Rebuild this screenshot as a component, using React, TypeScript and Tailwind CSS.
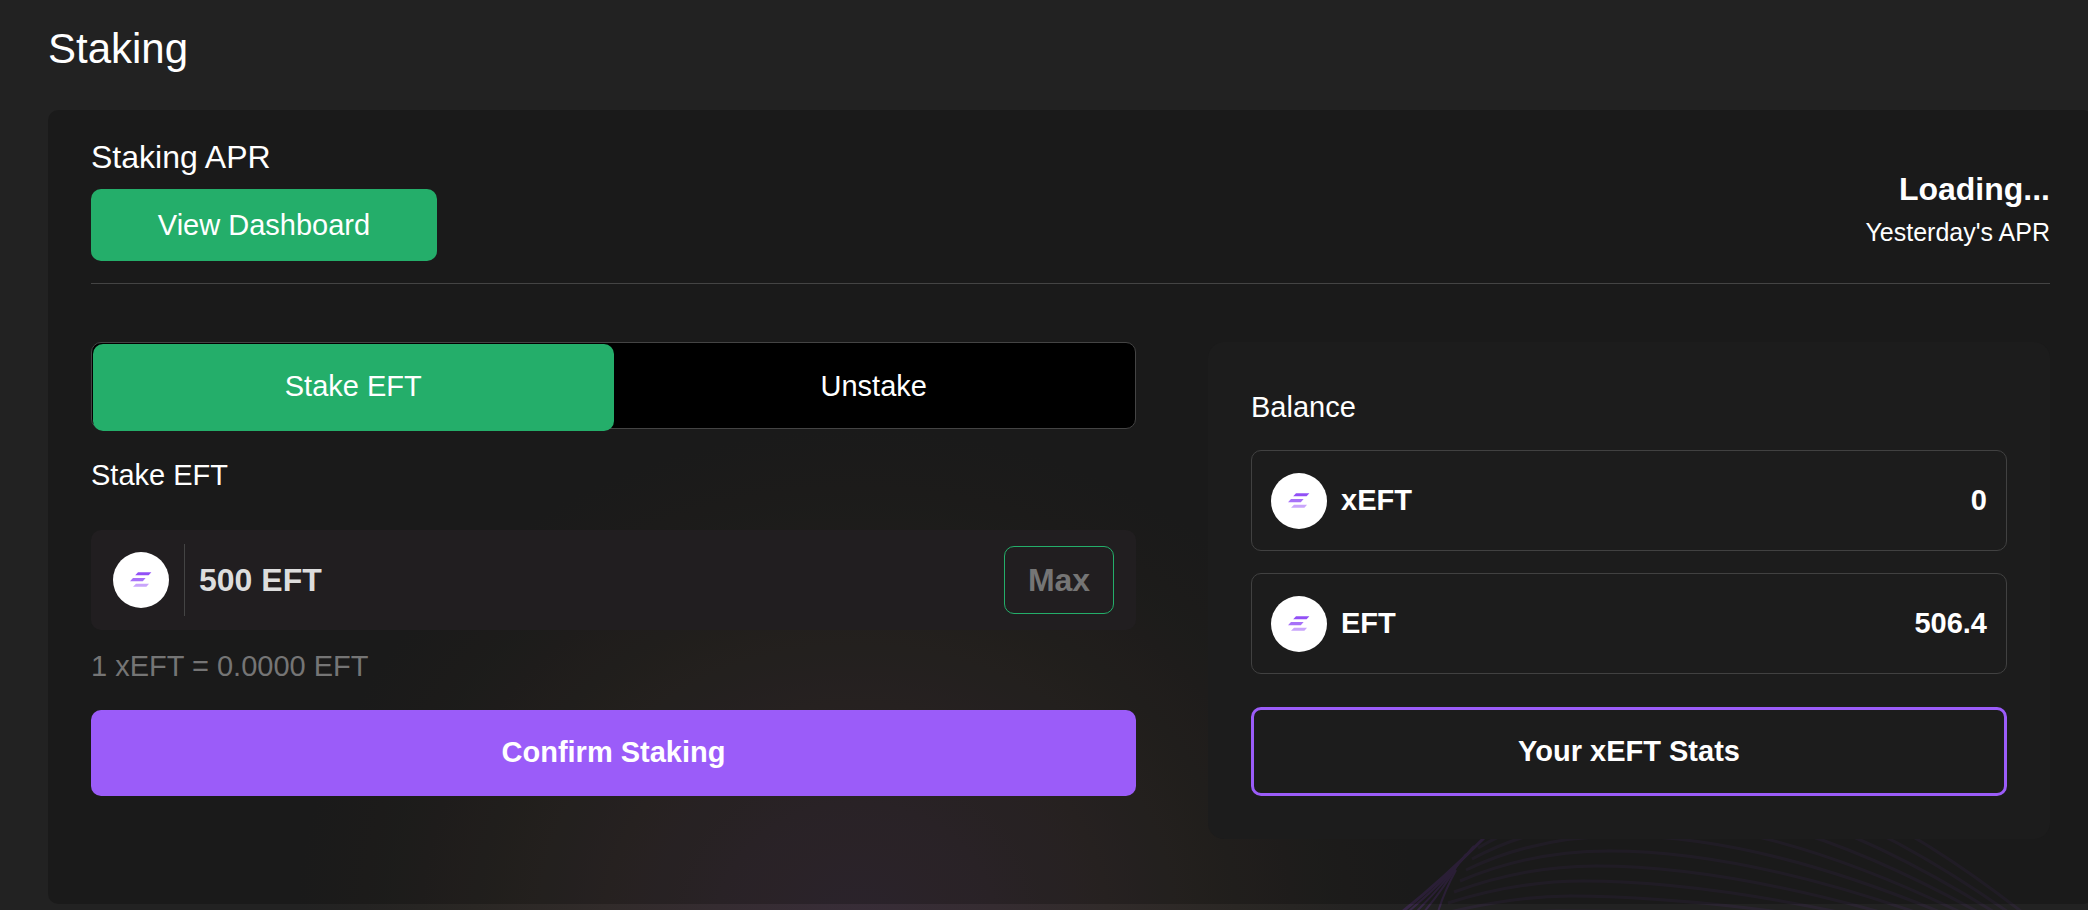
import React from "react";

function TokenIcon() {
  return (
    <span className="flex size-14 shrink-0 items-center justify-center rounded-full bg-white">
      <svg width="56" height="56" viewBox="0 0 56 56" aria-hidden="true">
        <path d="M25 20.2H38.4L35.6 23.2H22.2Z" fill="#9250f6" />
        <path d="M20 26H32.6L29.8 29.2H17Z" fill="#a771f8" />
        <path d="M23 31.8H36L33.4 34.8H20Z" fill="#c9a5fb" />
      </svg>
    </span>
  );
}

function BalanceRow({ name, value }: { name: string; value: string }) {
  return (
    <li className="flex h-[101px] items-center rounded-[10px] border border-[#414141] px-[19px] text-[29px] font-bold">
      <TokenIcon />
      <span className="ml-3.5">{name}</span>
      <span className="ml-auto">{value}</span>
    </li>
  );
}

const waveEnds = [1700, 1780, 1838, 1880, 1915, 1940, 1960, 1978, 1994, 2008, 2022];

function wavePath(end: number, i: number) {
  const peakX = 1557 + i * 13;
  const peakY = 911 - i * 15;
  const startX = 1436 + i * 6;
  const startY = 925 - i * 11;
  const control = peakX + (end - peakX) * 0.42;
  return `M${startX} ${startY}Q${startX + 70} ${peakY} ${peakX} ${peakY}Q${control} ${peakY} ${end} 912`;
}

function Waves() {
  return (
    <svg
      className="absolute right-0 bottom-0 h-[110px] w-[708px]"
      viewBox="1380 800 708 110"
      fill="none"
      stroke="#8a3fd8"
      aria-hidden="true"
    >
      <g opacity="0.08" strokeWidth="3">
        {waveEnds.map((end, i) => (
          <path key={end} d={wavePath(end, i)} />
        ))}
      </g>
      <g opacity="0.2" strokeWidth="2">
        <path d="M1402 912Q1442 880 1484 838" strokeWidth="3" />
        <path d="M1408 912Q1448 878 1474 846" />
        <path d="M1416 912Q1446 882 1466 854" />
        <path d="M1424 912Q1444 888 1458 864" />
        <path d="M1438 912Q1444 892 1456 870" />
      </g>
    </svg>
  );
}

export default function App() {
  return (
    <div
      className="relative min-h-screen overflow-hidden bg-[#222222] pb-1.5 pl-12 text-white"
      style={{ fontFamily: '"Liberation Sans", Arial, Helvetica, sans-serif' }}
    >
      <div className="absolute inset-0 bg-[radial-gradient(560px_500px_at_41%_102%,#382d38_0%,#352c31_25%,#312b2a_45%,#2a2724_68%,#242322_88%,#222222_100%)]" />
      <Waves />
      <div className="relative">
        <h1 className="pt-[25px] text-[42px] leading-[48px]">Staking</h1>
        <main className="mt-[37px] -mr-[5px] min-h-[794px] rounded-[10px] bg-black/22 px-[43px] pt-7 pb-[65px]">
          <header className="flex items-center justify-between border-b border-[#444444] pb-[22px]">
            <div>
              <h2 className="text-[32px] leading-[38px]">Staking APR</h2>
              <a
                href="#dashboard"
                className="mt-[13px] flex h-[72px] w-[346px] items-center justify-center rounded-[10px] bg-[#24ae6a] pt-0.5 text-[29px]"
              >
                View Dashboard
              </a>
            </div>
            <div className="pt-[22px] text-right">
              <p className="text-[32px] leading-[42px] font-bold">Loading...</p>
              <p className="text-[25px] leading-[44px]">Yesterday's APR</p>
            </div>
          </header>

          <div className="mt-[58px] grid grid-cols-[1045fr_842fr] items-start gap-[72px]">
            <section>
              <div className="flex h-[87px] rounded-[10px] border border-[#444444] bg-black p-px text-[29px]">
                <button type="button" className="h-[87px] flex-1 rounded-[10px] bg-[#24ae6a] pb-0.5">
                  Stake EFT
                </button>
                <button type="button" className="h-[87px] flex-1 rounded-[10px] pb-0.5">
                  Unstake
                </button>
              </div>
              <label htmlFor="amount" className="mt-[29px] block text-[29px] leading-[34px]">
                Stake EFT
              </label>
              <div className="mt-[38px] flex h-[100px] items-center rounded-[10px] bg-[#211e20] px-[22px] text-[32px] font-bold">
                <TokenIcon />
                <span className="ml-[15px] h-[72px] w-px bg-[#444444]" />
                <input
                  id="amount"
                  type="text"
                  defaultValue="500 EFT"
                  className="ml-3.5 min-w-0 flex-1 bg-transparent text-[#dddddd] outline-none"
                />
                <button
                  type="button"
                  className="h-[68px] w-[110px] rounded-[10px] border border-[#24ae6a] text-[#757575]"
                >
                  Max
                </button>
              </div>
              <p className="mt-[19px] text-[29px] leading-[34px] text-[#757575]">1 xEFT = 0.0000 EFT</p>
              <button
                type="button"
                className="mt-[27px] h-[86px] w-full rounded-[10px] bg-[#9b5cf9] text-[29px] font-bold"
              >
                Confirm Staking
              </button>
            </section>

            <section className="rounded-2xl bg-[#1c1c1c] px-[43px] pt-12 pb-[43px]">
              <h2 className="text-[29px] leading-[34px]">Balance</h2>
              <ul className="mt-[26px] flex flex-col gap-[22px]">
                <BalanceRow name="xEFT" value="0" />
                <BalanceRow name="EFT" value="506.4" />
              </ul>
              <button
                type="button"
                className="mt-[33px] h-[89px] w-full rounded-[10px] border-3 border-[#9b5cf9] text-[29px] font-bold"
              >
                Your xEFT Stats
              </button>
            </section>
          </div>
        </main>
      </div>
    </div>
  );
}
